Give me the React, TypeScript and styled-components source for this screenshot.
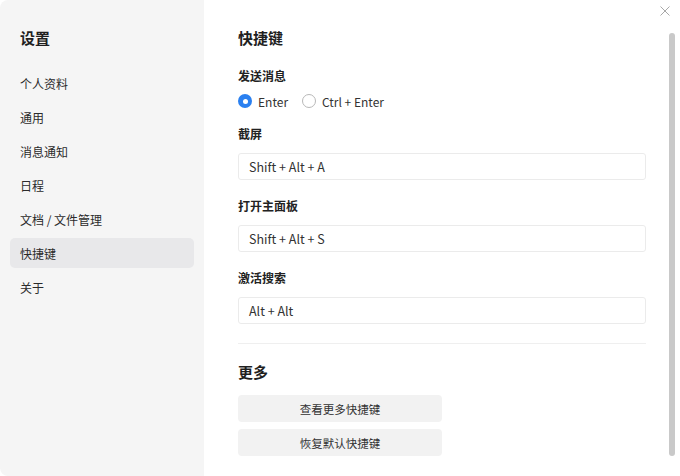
import React from "react";
import styled, { createGlobalStyle } from "styled-components";

const Global = createGlobalStyle`
  html, body { margin: 0; padding: 0; background: #ffffff; }
  body { font-family: "Noto Sans CJK SC", "Noto Sans", sans-serif; color: #333; }
  * { box-sizing: border-box; }
`;

const Window = styled.div`
  position: relative;
  display: flex;
  width: 680px;
  height: 476px;
  border-radius: 8px;
  overflow: hidden;
  background: #fff;
`;

const Sidebar = styled.nav`
  width: 204px;
  flex-shrink: 0;
  background: #f5f5f5;
  padding: 27px 10px 0;
  display: flex;
  flex-direction: column;
`;

const Heading = styled.h1`
  margin: 0;
  font-family: "Noto Sans CJK SC", sans-serif;
  font-size: 15px;
  line-height: 22px;
  font-weight: 700;
  color: #1f1f1f;
`;

const SideHeading = styled(Heading)`
  padding-left: 10px;
  margin-bottom: 19px;
`;

const NavList = styled.div`
  display: flex;
  flex-direction: column;
  gap: 4px;
`;

const NavItem = styled.div<{ $active?: boolean }>`
  height: 30px;
  display: flex;
  align-items: center;
  padding-left: 10px;
  border-radius: 5px;
  font-size: 12px;
  color: #2b2b2b;
  background: ${(p) => (p.$active ? "#e8e8ea" : "transparent")};
`;

const Main = styled.main`
  flex: 1;
  padding: 27px 34px 0;
  display: flex;
  flex-direction: column;
`;

const MainHeading = styled(Heading)`
  margin-bottom: 17px;
`;

const Label = styled.div`
  font-size: 12px;
  line-height: 20px;
  font-weight: 600;
  color: #222;
`;

const RadioRow = styled.div`
  display: flex;
  align-items: center;
  height: 20px;
  margin-top: 5px;
  margin-bottom: 13px;
`;

const RadioOption = styled.label`
  display: flex;
  align-items: center;
  gap: 6px;
  margin-right: 14px;
  font-size: 12px;
  color: #333;
`;

const RadioDot = styled.span<{ $checked?: boolean }>`
  width: 14px;
  height: 14px;
  border-radius: 50%;
  box-sizing: border-box;
  display: inline-flex;
  align-items: center;
  justify-content: center;
  background: ${(p) => (p.$checked ? "#2a80f0" : "#fff")};
  border: ${(p) => (p.$checked ? "none" : "1px solid #b8b8b8")};
  &::after {
    content: "";
    display: ${(p) => (p.$checked ? "block" : "none")};
    width: 5px;
    height: 5px;
    border-radius: 50%;
    background: #fff;
  }
`;

const Field = styled.div`
  display: flex;
  flex-direction: column;
  gap: 9px;
  margin-bottom: 16px;
`;

const KeyInput = styled.div`
  height: 27px;
  border: 1px solid #ebebeb;
  border-radius: 3px;
  display: flex;
  align-items: center;
  padding-left: 10px;
  font-size: 12.5px;
  color: #333;
`;

const Divider = styled.hr`
  border: none;
  border-top: 1px solid #efefef;
  margin: 3px 0 17px;
`;

const SubHeading = styled.h2`
  margin: 0 0 12px;
  font-size: 15px;
  line-height: 22px;
  font-weight: 700;
  color: #1f1f1f;
`;

const ButtonStack = styled.div`
  display: flex;
  flex-direction: column;
  gap: 7px;
`;

const ActionButton = styled.button`
  width: 204px;
  height: 27px;
  border: none;
  border-radius: 4px;
  background: #f2f2f2;
  font-family: "Noto Sans CJK SC", sans-serif;
  font-size: 11.5px;
  color: #333;
  padding: 0;
`;

const CloseButton = styled.button`
  position: absolute;
  top: 5px;
  right: 10px;
  width: 11px;
  height: 11px;
  padding: 0;
  border: none;
  background: transparent;
  display: flex;
  align-items: center;
  justify-content: center;
`;

const ScrollThumb = styled.div`
  position: absolute;
  top: 33px;
  right: 5px;
  width: 6px;
  height: 423px;
  border-radius: 3px;
  background: #c9c9c9;
`;

const navItems = ["个人资料", "通用", "消息通知", "日程", "文档 / 文件管理", "快捷键", "关于"];

const shortcuts = [
  { label: "截屏", keys: "Shift + Alt + A" },
  { label: "打开主面板", keys: "Shift + Alt + S" },
  { label: "激活搜索", keys: "Alt + Alt" },
];

export default function App() {
  return (
    <>
      <Global />
      <Window>
        <Sidebar>
          <SideHeading>设置</SideHeading>
          <NavList>
            {navItems.map((n) => (
              <NavItem key={n} $active={n === "快捷键"}>
                {n}
              </NavItem>
            ))}
          </NavList>
        </Sidebar>
        <Main>
          <MainHeading>快捷键</MainHeading>
          <Label>发送消息</Label>
          <RadioRow>
            <RadioOption>
              <RadioDot $checked />
              Enter
            </RadioOption>
            <RadioOption>
              <RadioDot />
              Ctrl + Enter
            </RadioOption>
          </RadioRow>
          {shortcuts.map((s) => (
            <Field key={s.label}>
              <Label>{s.label}</Label>
              <KeyInput>{s.keys}</KeyInput>
            </Field>
          ))}
          <Divider />
          <SubHeading>更多</SubHeading>
          <ButtonStack>
            <ActionButton>查看更多快捷键</ActionButton>
            <ActionButton>恢复默认快捷键</ActionButton>
          </ButtonStack>
        </Main>
        <CloseButton aria-label="close">
          <svg width="10" height="10" viewBox="0 0 10 10">
            <path d="M0.5 0.5 L9.5 9.5 M9.5 0.5 L0.5 9.5" stroke="#a8a8a8" strokeWidth="1" fill="none" />
          </svg>
        </CloseButton>
        <ScrollThumb />
      </Window>
    </>
  );
}
